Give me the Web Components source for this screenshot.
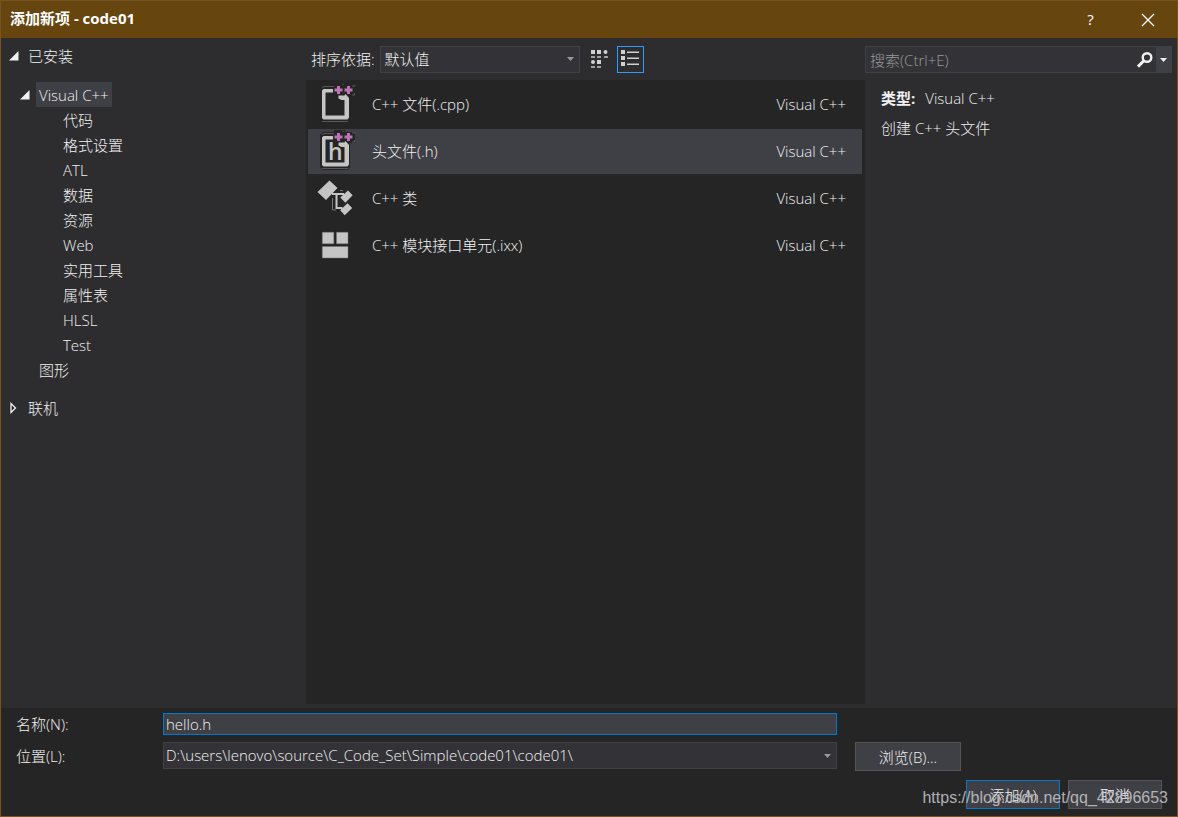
<!DOCTYPE html>
<html lang="zh-CN">
<head>
<meta charset="utf-8">
<title>添加新项 - code01</title>
<style>
html, body { margin: 0; height: 100%; }
body {
  --fg: #f1f1f1; --panel: #2d2d30; --dark: #252526; --field: #333337; --line: #3f3f46; --accent: #007acc;
  color: var(--fg); background: var(--dark);
  font: 300 15px/25px "Open Sans", "Noto Sans CJK SC", sans-serif;
}
</style>
</head>
<body>
<new-item-dialog></new-item-dialog>
<script>
const define = (name, html, setup) => customElements.define(name, class extends HTMLElement {
  constructor() {
    super();
    const t = document.createElement('template');
    t.innerHTML = '<style>*{box-sizing:border-box}button,input,select{font:inherit;color:inherit;margin:0}svg{display:block}</style>' + html;
    this.attachShadow({ mode: 'open' }).append(t.content.cloneNode(true));
  }
  connectedCallback() { if (setup) setup(this, this.shadowRoot); }
});

define('title-bar', `
<style>
:host { display: flex; align-items: center; height: 37px; background: #67450f; padding: 0 1px 0 9px; }
h1 { flex: 1; margin: 0; padding-bottom: 2px; font-size: 15px; font-weight: 700; color: #fff; }
button { width: 57px; height: 37px; padding: 0; border: 0; background: none; display: grid; place-items: center; color: #fff; font-weight: 400; }
</style>
<h1><slot></slot></h1>
<button aria-label="帮助">?</button>
<button aria-label="关闭"><svg width="14" height="14" viewBox="0 0 14 14" fill="none" stroke="#fff" stroke-width="1.3"><path d="M1 1l12 12M13 1L1 13"/></svg></button>
`);

const arrows = {
  open: '<svg width="10" height="10" viewBox="0 0 10 10"><path d="M0 9.5H9.5V0z" fill="#f1f1f1"/></svg>',
  closed: '<svg width="10" height="12" viewBox="0 0 10 12"><path d="M2 1.5v9L6.500 6z" fill="none" stroke="#f1f1f1" stroke-width="1.300"/></svg>',
};
define('tree-node', `
<style>
:host { display: block; }
.row { display: flex; align-items: center; height: 25px; }
.arrow { width: 16px; flex: none; }
button { height: 25px; line-height: 23px; padding: 2px 3px 0; border: 0; background: none; white-space: nowrap; text-align: left; }
:host([selected]) button { background: var(--line); }
.kids { padding-left: 24px; }
:host([root]) .kids { padding: 14px 0 13px 11px; }
:host([state=closed]) .kids, :host(:not([state])) .kids { display: none; }
</style>
<div class="row"><span class="arrow"></span><button></button></div>
<div class="kids"><slot></slot></div>
`, (el, root) => {
  root.querySelector('button').textContent = el.getAttribute('label');
  root.querySelector('.arrow').innerHTML = arrows[el.getAttribute('state')] || '';
});

define('category-tree', `
<style>
:host { display: block; padding: 5px 0 0 8px; }
</style>
<tree-node root state="open" label="已安装">
  <tree-node state="open" selected label="Visual C++">
    <tree-node label="代码"></tree-node>
    <tree-node label="格式设置"></tree-node>
    <tree-node label="ATL"></tree-node>
    <tree-node label="数据"></tree-node>
    <tree-node label="资源"></tree-node>
    <tree-node label="Web"></tree-node>
    <tree-node label="实用工具"></tree-node>
    <tree-node label="属性表"></tree-node>
    <tree-node label="HLSL"></tree-node>
    <tree-node label="Test"></tree-node>
  </tree-node>
  <tree-node label="图形"></tree-node>
</tree-node>
<tree-node root state="closed" label="联机"></tree-node>
`);

const caret = '<svg class="caret" width="7" height="4" viewBox="0 0 7 4"><path d="M0 0h7L3.500 4z" fill="#999"/></svg>';
define('drop-down', `
<style>
:host { display: grid; height: 27px; align-items: center; }
select, .caret { grid-area: 1 / 1; }
select { appearance: none; width: 100%; height: 27px; border: 1px solid var(--line); border-radius: 0; background: var(--field); padding: 0 20px 0 var(--inset, 4px); outline: 0; }
.caret { justify-self: end; margin-right: 6px; pointer-events: none; }
</style>
<select><option></option></select>${caret}
`, (el, root) => {
  root.querySelector('option').textContent = el.getAttribute('value');
  root.querySelector('select').setAttribute('aria-label', el.getAttribute('label'));
});

define('sort-bar', `
<style>
:host { display: flex; align-items: center; height: 42px; padding-left: 5px; }
drop-down { width: 200px; margin: 0 5px; }
button { width: 27px; height: 27px; padding: 0; border: 1px solid transparent; background: none; margin-right: 5px; }
button.on { border-color: #39f; }
</style>
<span>排序依据:</span><drop-down label="排序依据" value="默认值"></drop-down>
<button aria-label="中等图标"><svg width="25" height="25" viewBox="0 0 25 25" fill="#d0d0d0"><path d="M5 3h4v4h-4zM11 3h4v4h-4zM11 13h4v4h-4z"/><circle cx="19.500" cy="5" r="2"/><circle cx="7" cy="15" r="2"/><path opacity=".7" d="M5 9h4v2h-4zM11 9h4v2h-4zM18 9h4v2h-4zM5 19h4v2h-4zM11 19h4v2h-4z"/></svg></button>
<button class="on" aria-label="小图标"><svg width="25" height="25" viewBox="0 0 25 25" fill="#d0d0d0"><path d="M3 3h4v4h-4zM3 9h4v4h-4zM3 15h4v4h-4z"/><path d="M9 4.500h12v1.500h-12zM9 10.500h12v1.500h-12zM9 16.500h12v1.500h-12z"/></svg></button>
`);

const plus = '<path fill="#bb74b6" d="M25 6h3v2.500h2.500v3h-2.500v2.500h-3v-2.500h-2.500v-3h2.500zM35 6h3v2.500h2.500v3h-2.500v2.500h-3v-2.500h-2.500v-3h2.500z"/>';
const sheet = '<path fill="#252526" d="M11 5h11V3h11v2h10v11h-5v24l-2 3H11l-3-3V8z"/><path d="M10 7.500L12 6.500H22M10 41.500H36M31 5V3.500M40 6h3v-1M40 15h2.500v-2" fill="none" stroke="#666" stroke-width=".8"/><path fill="#c5c5c5" d="M11.500 9H21v3.500h-7.500v23H32.500V20h-3l-3-1.500v-3h6l1-1.500 3.500 4V37.500L35.500 39.500h-24L10 38V10.500z"/>' + plus;
const icons = {
  cpp: sheet,
  header: sheet + '<text x="16" y="33" font-family="Open Sans" font-size="23" font-weight="600" fill="#c5c5c5">h</text>',
  klass: '<path d="M20.500 24V36H24M28 16.500h3" fill="none" stroke="#777"/><path fill="#c5c5c5" d="M17.500 6.500L25.500 14 14 26 5.500 18zM36 16.500L40.700 21.300 33.300 28.700 28.300 23.500zM35.500 29.300L40.200 34 32.700 41.300 28.200 36.300z"/><path d="M20 20h12M24.500 20V34h6" fill="none" stroke="#c5c5c5" stroke-width="2"/>',
  module: '<path fill="#c5c5c5" stroke="#777" stroke-width=".5" d="M10.300 11.300h11.500v11.500H10.300zM24.500 11.300H36v11.500H24.500zM10.300 25.500H36V37H10.300z"/>',
};
define('template-item', `
<style>
:host { display: block; }
button { display: flex; align-items: center; width: 100%; height: 45px; border: 0; background: none; padding: 0 16px 0 4px; text-align: left; }
:host([selected]) button { background: var(--line); }
svg { flex: none; margin-right: 10px; }
.name { flex: 1; }
</style>
<button><svg width="50" height="45" viewBox="0 2 50 45"></svg><span class="name"><slot></slot></span><span>Visual C++</span></button>
`, (el, root) => { root.querySelector('svg').innerHTML = icons[el.getAttribute('icon')]; });

define('template-list', `
<style>
:host { display: flex; flex-direction: column; gap: 2px; flex: 1; background: var(--dark); padding: 2px 3px 0 2px; }
</style>
<template-item icon="cpp">C++ 文件(.cpp)</template-item>
<template-item icon="header" selected>头文件(.h)</template-item>
<template-item icon="klass">C++ 类</template-item>
<template-item icon="module">C++ 模块接口单元(.ixx)</template-item>
`);

define('search-box', `
<style>
:host { display: flex; height: 27px; border: 1px solid var(--line); background: var(--field); box-sizing: border-box; }
input { flex: 1; min-width: 0; border: 0; padding: 2px 4px 0; background: none; outline: 0; }
input::placeholder { color: #999; opacity: 1; }
button { padding: 0; border: 0; background: none; display: grid; place-items: center; width: 22px; }
.more { width: 15px; background: var(--line); }
</style>
<input type="search" aria-label="搜索" placeholder="搜索(Ctrl+E)">
<button aria-label="搜索"><svg width="18" height="18" viewBox="0 0 18 18" fill="none" stroke="#f1f1f1"><circle cx="11" cy="6.500" r="4.300" stroke-width="2.400"/><path d="M7.800 9.800L2 15.600" stroke-width="3"/></svg></button>
<button class="more" aria-label="搜索选项"><svg width="7" height="4" viewBox="0 0 7 4"><path d="M0 0h7L3.500 4z" fill="#f1f1f1"/></svg></button>
`);

define('item-details', `
<style>
:host { display: block; padding: 8px 5px 0 0; }
.body { padding: 13px 16px 0; }
p { margin: 0 0 5px; }
b { font-weight: 700; margin-right: 10px; }
</style>
<search-box></search-box>
<div class="body"><p><b>类型:</b>Visual C++</p><p>创建 C++ 头文件</p></div>
`);

define('dialog-footer', `
<style>
:host { display: block; background: var(--dark); padding: 5px 0 7px 15px; position: relative; }
.fields { display: grid; grid-template-columns: 129px 1fr 106px; column-gap: 18px; row-gap: 7px; padding-right: 216px; }
label { line-height: 23px; }
.place { line-height: 29px; }
.name { grid-column: 2 / 4; margin-right: 124px; height: 22px; min-width: 0; border: 1px solid var(--accent); background: var(--line); padding: 0 2px; outline: 0; }
.fields label { height: 22px; }
drop-down { --inset: 2px; }
button { height: 29px; padding: 2px 0 0; border: 1px solid #555; background: var(--line); }
.actions { display: flex; justify-content: flex-end; gap: 8px; padding: 9px 15px 0 0; }
.actions button { width: 94px; }
.actions .ok { border-color: var(--accent); }
.mark { position: absolute; right: 9px; bottom: 6px; font: 400 16px/25px "Liberation Sans", sans-serif; color: #c8c8c8; opacity: .85; pointer-events: none; }
</style>
<div class="fields">
  <label for="n">名称(N):</label><input id="n" class="name" value="hello.h">
  <label class="place">位置(L):</label><drop-down label="位置(L)" value="D:\\users\\lenovo\\source\\C_Code_Set\\Simple\\code01\\code01\\"></drop-down><button>浏览(B)...</button>
</div>
<div class="actions"><button class="ok">添加(A)</button><button>取消</button></div>
<span class="mark">https://blog.csdn.net/qq_42896653</span>
`, (el, root) => {
  root.querySelector('.place').addEventListener('click', () => root.querySelector('drop-down').shadowRoot.querySelector('select').focus());
});

define('new-item-dialog', `
<style>
:host { display: flex; flex-direction: column; min-height: 100vh; box-sizing: border-box; border: 1px solid #765320; background: var(--panel); }
main { flex: 1; display: grid; grid-template-columns: 305px 1fr 312px; }
section { display: flex; flex-direction: column; padding-bottom: 4px; }
</style>
<title-bar>添加新项 - code01</title-bar>
<main>
  <category-tree></category-tree>
  <section><sort-bar></sort-bar><template-list></template-list></section>
  <item-details></item-details>
</main>
<dialog-footer></dialog-footer>
`);
</script>
</body>
</html>
